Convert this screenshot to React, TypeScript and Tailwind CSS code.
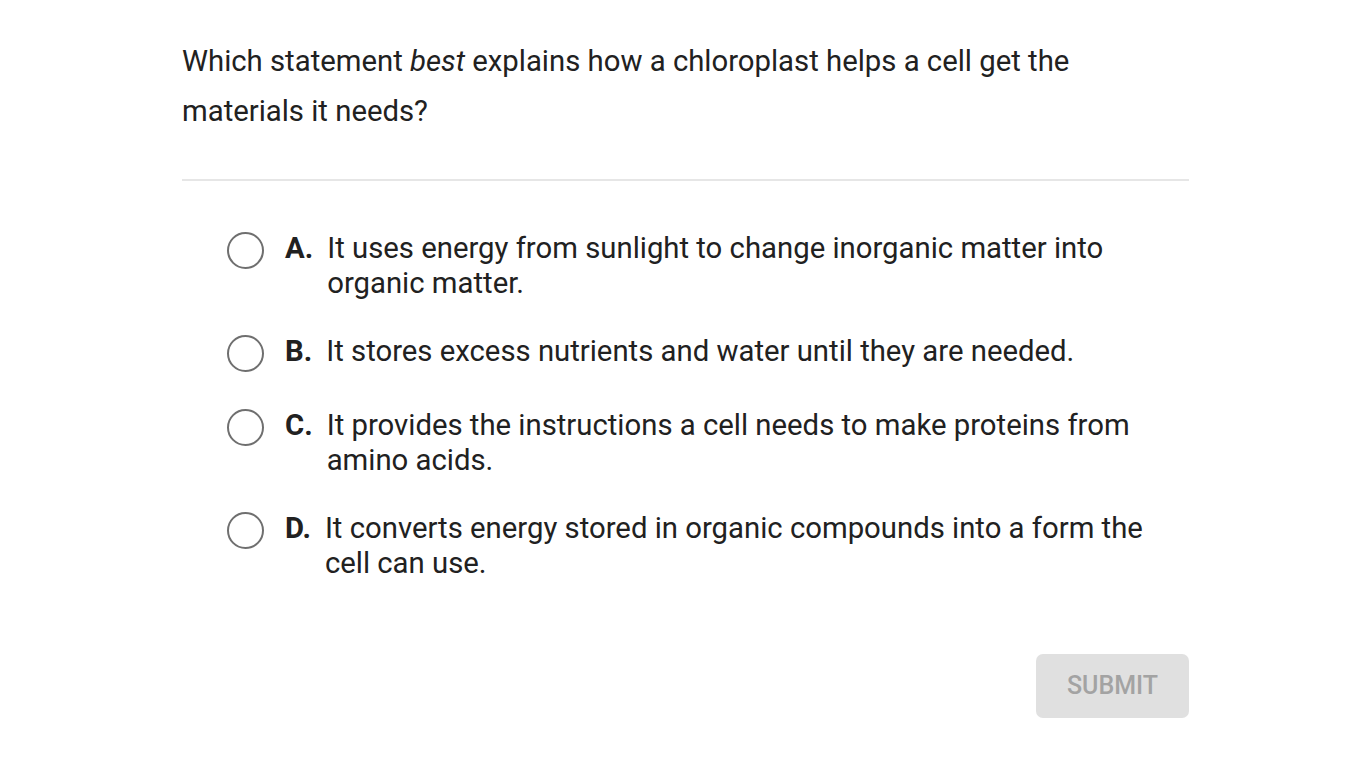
const options = [
    { letter: "A.", text: "It uses energy from sunlight to change inorganic matter into organic matter." },
    { letter: "B.", text: "It stores excess nutrients and water until they are needed." },
    { letter: "C.", text: "It provides the instructions a cell needs to make proteins from amino acids." },
    { letter: "D.", text: "It converts energy stored in organic compounds into a form the cell can use." },
];

export default function App() {
    return (
        <div className="min-h-screen bg-white font-['Roboto',sans-serif] text-[#212121]">
            <div className="ml-[182px] w-[1007px] pt-[36px]">
                <p className="text-[29.3px] leading-[50px] pr-[100px]">
                    Which statement <em>best</em> explains how a chloroplast helps a cell get the materials it needs?
                </p>

                <div className="mt-[43px] h-[2px] bg-[#e6e6e6]" />

                <div className="mt-[50px] pl-[45px] flex flex-col gap-[33px]">
                    {options.map((opt) => (
                        <div key={opt.letter} className="flex items-start min-h-[41px]">
                            <span className="mt-[1px] w-[37px] h-[37px] rounded-full border-2 border-[#6f6f6f] shrink-0" />
                            <span className="ml-[21px] text-[29.3px] leading-[35px] font-bold shrink-0">
                                {opt.letter}
                            </span>
                            <span className="ml-[14px] text-[29.3px] leading-[35px] pr-[40px]">
                                {opt.text}
                            </span>
                        </div>
                    ))}
                </div>

                <div className="mt-[73px] flex justify-end">
                    <button className="w-[153px] h-[64px] rounded-[7px] bg-[#e0e0e0] text-[#a3a3a3] text-[25px] font-medium">
                        SUBMIT
                    </button>
                </div>
            </div>
        </div>
    );
}
